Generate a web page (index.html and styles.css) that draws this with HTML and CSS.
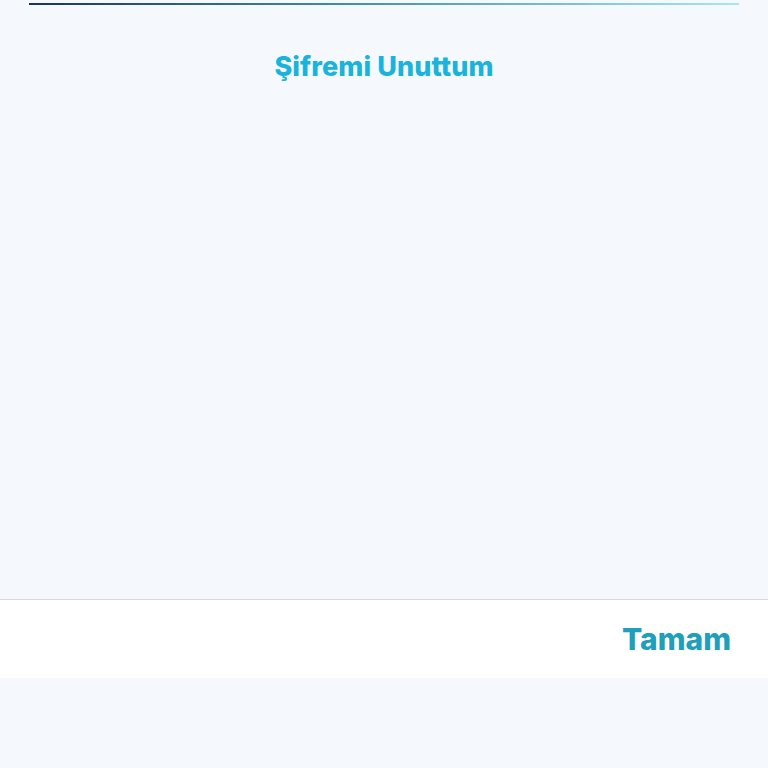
FILE: index.html
```html
<!DOCTYPE html>
<html lang="tr">
<head>
    <meta charset="UTF-8">
    <meta name="viewport" content="width=device-width, initial-scale=1.0">
    <title>Şifremi Unuttum</title>
    <link rel="stylesheet" href="styles.css">
</head>
<body>
    <div class="sheet">
        <div class="top-line"></div>
        <h1 class="title">Şifremi Unuttum</h1>
    </div>
    <div class="footer">
        <button class="ok-btn">Tamam</button>
    </div>
</body>
</html>
```

FILE: styles.css
```css
body {
    margin: 0;
    background-color: #f5f9fd;
    font-family: Inter, "Noto Sans", sans-serif;
}
.sheet {
    height: 599px;
    padding: 3px 29px 0;
    box-sizing: border-box;
}
.top-line {
    height: 2px;
    background: linear-gradient(to right, #1c3550, #3f8fae 45%, #a6e8f0);
}
.title {
    margin: 45px 0 0;
    text-align: center;
    font-size: 27px;
    font-weight: 800;
    color: #1ab3db;
    letter-spacing: 0.1px;
}
.footer {
    height: 78px;
    background: #ffffff;
    border-top: 1px solid #d6d9dc;
    display: flex;
    justify-content: flex-end;
    align-items: center;
}
.ok-btn {
    border: none;
    background: none;
    padding: 0 37px 0 0;
    font-family: inherit;
    font-size: 30px;
    font-weight: 800;
    color: #1f9fba;
}
```
